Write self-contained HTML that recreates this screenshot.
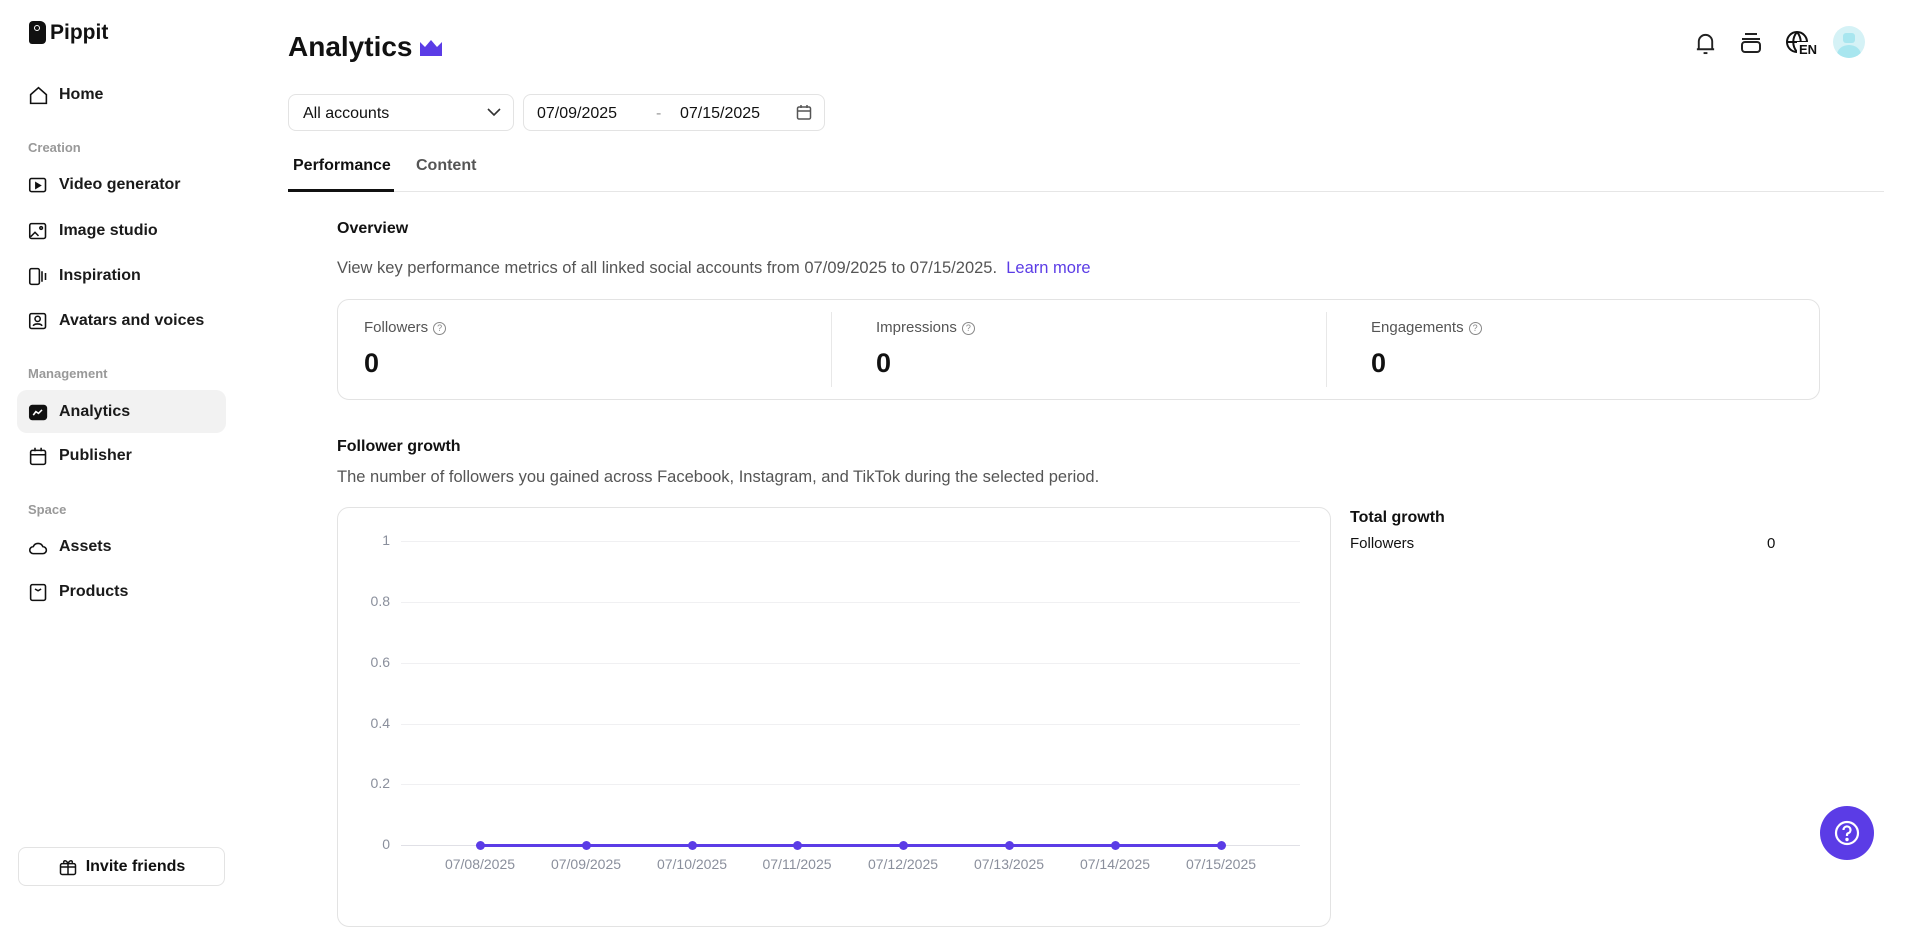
<!DOCTYPE html>
<html><head><meta charset="utf-8"><style>
*{margin:0;padding:0;box-sizing:border-box}
body{width:1913px;height:894px;overflow:hidden;background:#fff;font-family:"Liberation Sans",Arial,sans-serif;color:#111;position:relative}
.a{position:absolute;white-space:nowrap}
.nav{position:absolute;left:28px;font-size:16px;font-weight:700;color:#1a1a1a;display:flex;align-items:center;gap:10px;height:24px}
.nav svg{width:21px;height:21px;fill:none;stroke:#111;stroke-width:1.8}
.sec{position:absolute;left:28px;font-size:13px;color:#999;font-weight:700}
.ylab{position:absolute;right:1523px;font-size:14px;color:#8a8f9c;text-align:right}
.grid{position:absolute;left:401px;width:899px;height:1px;background:#f0f0f2}
.xl{position:absolute;top:856px;font-size:14px;color:#8a8f9c;width:90px;text-align:center}
.dot{position:absolute;top:841px;width:9px;height:9px;border-radius:50%;background:#5b3ce6}
.q{display:inline-block;width:13px;height:13px;border:1.2px solid #888;border-radius:50%;font-size:9px;text-align:center;line-height:11px;color:#888;vertical-align:1px;margin-left:5px}
</style></head><body>
<div class="a" style="left:29px;top:21px;width:17px;height:23px;background:#111;border-radius:4px 6px 4px 3px"></div>
<div class="a" style="left:34px;top:25px;width:6px;height:6px;border:1.5px solid #fff;border-radius:50%"></div>
<div class="a" style="left:50px;top:21px;font-size:21px;font-weight:700">Pippit</div>

<div class="nav" style="top:83px"><svg viewBox="0 0 24 24"><path d="M3 11 12 3l9 8v10H3z"/></svg>Home</div>
<div class="sec" style="top:140px">Creation</div>
<div class="nav" style="top:173px"><svg viewBox="0 0 24 24"><rect x="2" y="4" width="18" height="15" rx="2"/><path d="M9 9l5 3-5 3z" fill="#111"/></svg>Video generator</div>
<div class="nav" style="top:219px"><svg viewBox="0 0 24 24"><rect x="2" y="3" width="18" height="17" rx="2"/><path d="M3 18l5-5 4 4"/><circle cx="15" cy="8" r="1.5"/></svg>Image studio</div>
<div class="nav" style="top:264px"><svg viewBox="0 0 24 24"><rect x="2" y="3" width="11" height="18" rx="2"/><path d="M16 6v12M20 8v8"/></svg>Inspiration</div>
<div class="nav" style="top:309px"><svg viewBox="0 0 24 24"><rect x="2" y="3" width="18" height="17" rx="2"/><circle cx="11" cy="9" r="3"/><path d="M6 17c1-3 9-3 10 0"/></svg>Avatars and voices</div>
<div class="sec" style="top:366px">Management</div>
<div class="a" style="left:17px;top:390px;width:209px;height:43px;background:#f2f2f2;border-radius:10px"></div>
<div class="nav" style="top:400px"><svg viewBox="0 0 24 24"><rect x="2" y="4" width="19" height="16" rx="3" fill="#111"/><path d="M6 15l3-4 3 2 4-4" stroke="#fff"/></svg>Analytics</div>
<div class="nav" style="top:444px"><svg viewBox="0 0 24 24"><rect x="3" y="5" width="17" height="16" rx="2"/><path d="M3 10h17M8 2v4M15 2v4"/></svg>Publisher</div>
<div class="sec" style="top:502px">Space</div>
<div class="nav" style="top:535px"><svg viewBox="0 0 24 24"><path d="M6 19a4 4 0 0 1 0-8 6 6 0 0 1 11 0 4 4 0 0 1 0 8z"/></svg>Assets</div>
<div class="nav" style="top:580px"><svg viewBox="0 0 24 24"><rect x="3" y="3" width="17" height="18" rx="2"/><path d="M8 8l3.5 2L15 8"/></svg>Products</div>
<div class="a" style="left:18px;top:847px;width:207px;height:39px;border:1px solid #e3e3e3;border-radius:8px;display:flex;align-items:center;justify-content:center;gap:8px;font-size:16px;font-weight:700">
<svg width="20" height="20" viewBox="0 0 24 24" fill="none" stroke="#111" stroke-width="1.8"><rect x="3" y="8" width="18" height="13" rx="2"/><path d="M3 12h18M12 8v13M12 8c-2-5-6-4-5-1M12 8c2-5 6-4 5-1"/></svg>Invite friends</div>

<div class="a" style="left:288px;top:31px;font-size:28px;font-weight:700">Analytics</div>
<svg class="a" style="left:420px;top:40px" width="22" height="16" viewBox="0 0 22 16"><path d="M0 2l5 5 6-7 6 7 5-5v14H0z" fill="#5b3ce6"/></svg>

<svg class="a" style="left:1694px;top:31px" width="23" height="25" viewBox="0 0 24 26" fill="none" stroke="#222" stroke-width="2"><path d="M5 19V11a7 7 0 0 1 14 0v8H3h18"/><path d="M10 23h4"/></svg>
<svg class="a" style="left:1740px;top:32px" width="22" height="22" viewBox="0 0 22 22" fill="none" stroke="#222" stroke-width="2"><path d="M5 2h12M2 7h18"/><rect x="2" y="10" width="18" height="10" rx="3"/></svg>
<svg class="a" style="left:1785px;top:30px" width="38" height="26" viewBox="0 0 38 26" fill="none" stroke="#111" stroke-width="2"><circle cx="12" cy="12" r="10"/><path d="M2 12h20M12 2c-5 6-5 14 0 20M12 2c5 6 5 14 0 20"/></svg>
<div class="a" style="left:1797px;top:42px;font-size:13px;font-weight:700;background:#fff;padding-left:2px">EN</div>
<div class="a" style="left:1833px;top:26px;width:32px;height:32px;border-radius:50%;background:#d5f2f6;overflow:hidden"><div style="position:absolute;left:10px;top:7px;width:12px;height:10px;background:#a8e6ef;border-radius:3px"></div><div style="position:absolute;left:4px;top:19px;width:24px;height:20px;background:#a8e6ef;border-radius:50%"></div></div>

<div class="a" style="left:288px;top:94px;width:226px;height:37px;border:1px solid #e3e3e3;border-radius:8px;font-size:16px;padding:10px 14px">All accounts
<svg style="position:absolute;right:12px;top:13px" width="14" height="9" viewBox="0 0 14 9" fill="none" stroke="#333" stroke-width="1.6"><path d="M1 1l6 6 6-6"/></svg></div>
<div class="a" style="left:523px;top:94px;width:302px;height:37px;border:1px solid #e3e3e3;border-radius:8px;font-size:16px">
<span class="a" style="left:13px;top:10px">07/09/2025</span><span class="a" style="left:132px;top:10px;color:#999">-</span><span class="a" style="left:156px;top:10px">07/15/2025</span>
<svg class="a" style="left:272px;top:9px" width="16" height="17" viewBox="0 0 16 17" fill="none" stroke="#555" stroke-width="1.5"><rect x="1.5" y="3" width="13" height="12" rx="1.5"/><path d="M1.5 7h13M5 1v3M11 1v3"/></svg></div>

<div class="a" style="left:293px;top:157px;font-size:16px;font-weight:700">Performance</div>
<div class="a" style="left:416px;top:157px;font-size:16px;font-weight:700;color:#555">Content</div>
<div class="a" style="left:288px;top:191px;width:1596px;height:1px;background:#e6e6e6"></div>
<div class="a" style="left:288px;top:189px;width:106px;height:3px;background:#111"></div>

<div class="a" style="left:337px;top:220px;font-size:16px;font-weight:700">Overview</div>
<div class="a" style="left:337px;top:259px;font-size:16.5px;color:#555">View key performance metrics of all linked social accounts from 07/09/2025 to 07/15/2025. &nbsp;<span style="color:#5b3ce6">Learn more</span></div>
<div class="a" style="left:337px;top:299px;width:1483px;height:101px;border:1px solid #e3e3e3;border-radius:12px"></div>
<div class="a" style="left:831px;top:312px;width:1px;height:75px;background:#e8e8e8"></div>
<div class="a" style="left:1326px;top:312px;width:1px;height:75px;background:#e8e8e8"></div>
<div class="a" style="left:364px;top:319px;font-size:15px;color:#555">Followers<span class="q">?</span></div>
<div class="a" style="left:876px;top:319px;font-size:15px;color:#555">Impressions<span class="q">?</span></div>
<div class="a" style="left:1371px;top:319px;font-size:15px;color:#555">Engagements<span class="q">?</span></div>
<div class="a" style="left:364px;top:348px;font-size:27px;font-weight:700">0</div>
<div class="a" style="left:876px;top:348px;font-size:27px;font-weight:700">0</div>
<div class="a" style="left:1371px;top:348px;font-size:27px;font-weight:700">0</div>

<div class="a" style="left:337px;top:438px;font-size:16px;font-weight:700">Follower growth</div>
<div class="a" style="left:337px;top:468px;font-size:16.5px;color:#555">The number of followers you gained across Facebook, Instagram, and TikTok during the selected period.</div>
<div class="a" style="left:337px;top:507px;width:994px;height:420px;border:1px solid #e3e3e3;border-radius:12px"></div>
<div class="a" style="left:1350px;top:509px;font-size:16px;font-weight:700">Total growth</div>
<div class="a" style="left:1350px;top:535px;font-size:15px">Followers</div>
<div class="a" style="left:1767px;top:535px;font-size:15px">0</div>

<div class="ylab" style="top:532px">1</div><div class="grid" style="top:541px"></div>
<div class="ylab" style="top:593px">0.8</div><div class="grid" style="top:602px"></div>
<div class="ylab" style="top:654px">0.6</div><div class="grid" style="top:663px"></div>
<div class="ylab" style="top:715px">0.4</div><div class="grid" style="top:724px"></div>
<div class="ylab" style="top:775px">0.2</div><div class="grid" style="top:784px"></div>
<div class="ylab" style="top:836px">0</div><div class="grid" style="top:845px;background:#e0e0e6"></div>
<div class="a" style="left:480px;top:844px;width:742px;height:3px;background:#5b3ce6"></div>
<div class="dot" style="left:476px"></div><div class="dot" style="left:582px"></div><div class="dot" style="left:688px"></div><div class="dot" style="left:793px"></div><div class="dot" style="left:899px"></div><div class="dot" style="left:1005px"></div><div class="dot" style="left:1111px"></div><div class="dot" style="left:1217px"></div>
<div class="xl" style="left:435px">07/08/2025</div><div class="xl" style="left:541px">07/09/2025</div><div class="xl" style="left:647px">07/10/2025</div><div class="xl" style="left:752px">07/11/2025</div><div class="xl" style="left:858px">07/12/2025</div><div class="xl" style="left:964px">07/13/2025</div><div class="xl" style="left:1070px">07/14/2025</div><div class="xl" style="left:1176px">07/15/2025</div>

<div class="a" style="left:1820px;top:806px;width:54px;height:54px;border-radius:50%;background:#5b3ce6"></div>
<svg class="a" style="left:1834px;top:820px" width="26" height="26" viewBox="0 0 26 26" fill="none" stroke="#fff" stroke-width="2.2"><circle cx="13" cy="13" r="11"/><path d="M9.5 10a3.5 3.5 0 1 1 4.5 3.3c-.8.3-1 1-1 1.7v1"/><circle cx="13" cy="19.5" r=".6" fill="#fff"/></svg>
</body></html>
